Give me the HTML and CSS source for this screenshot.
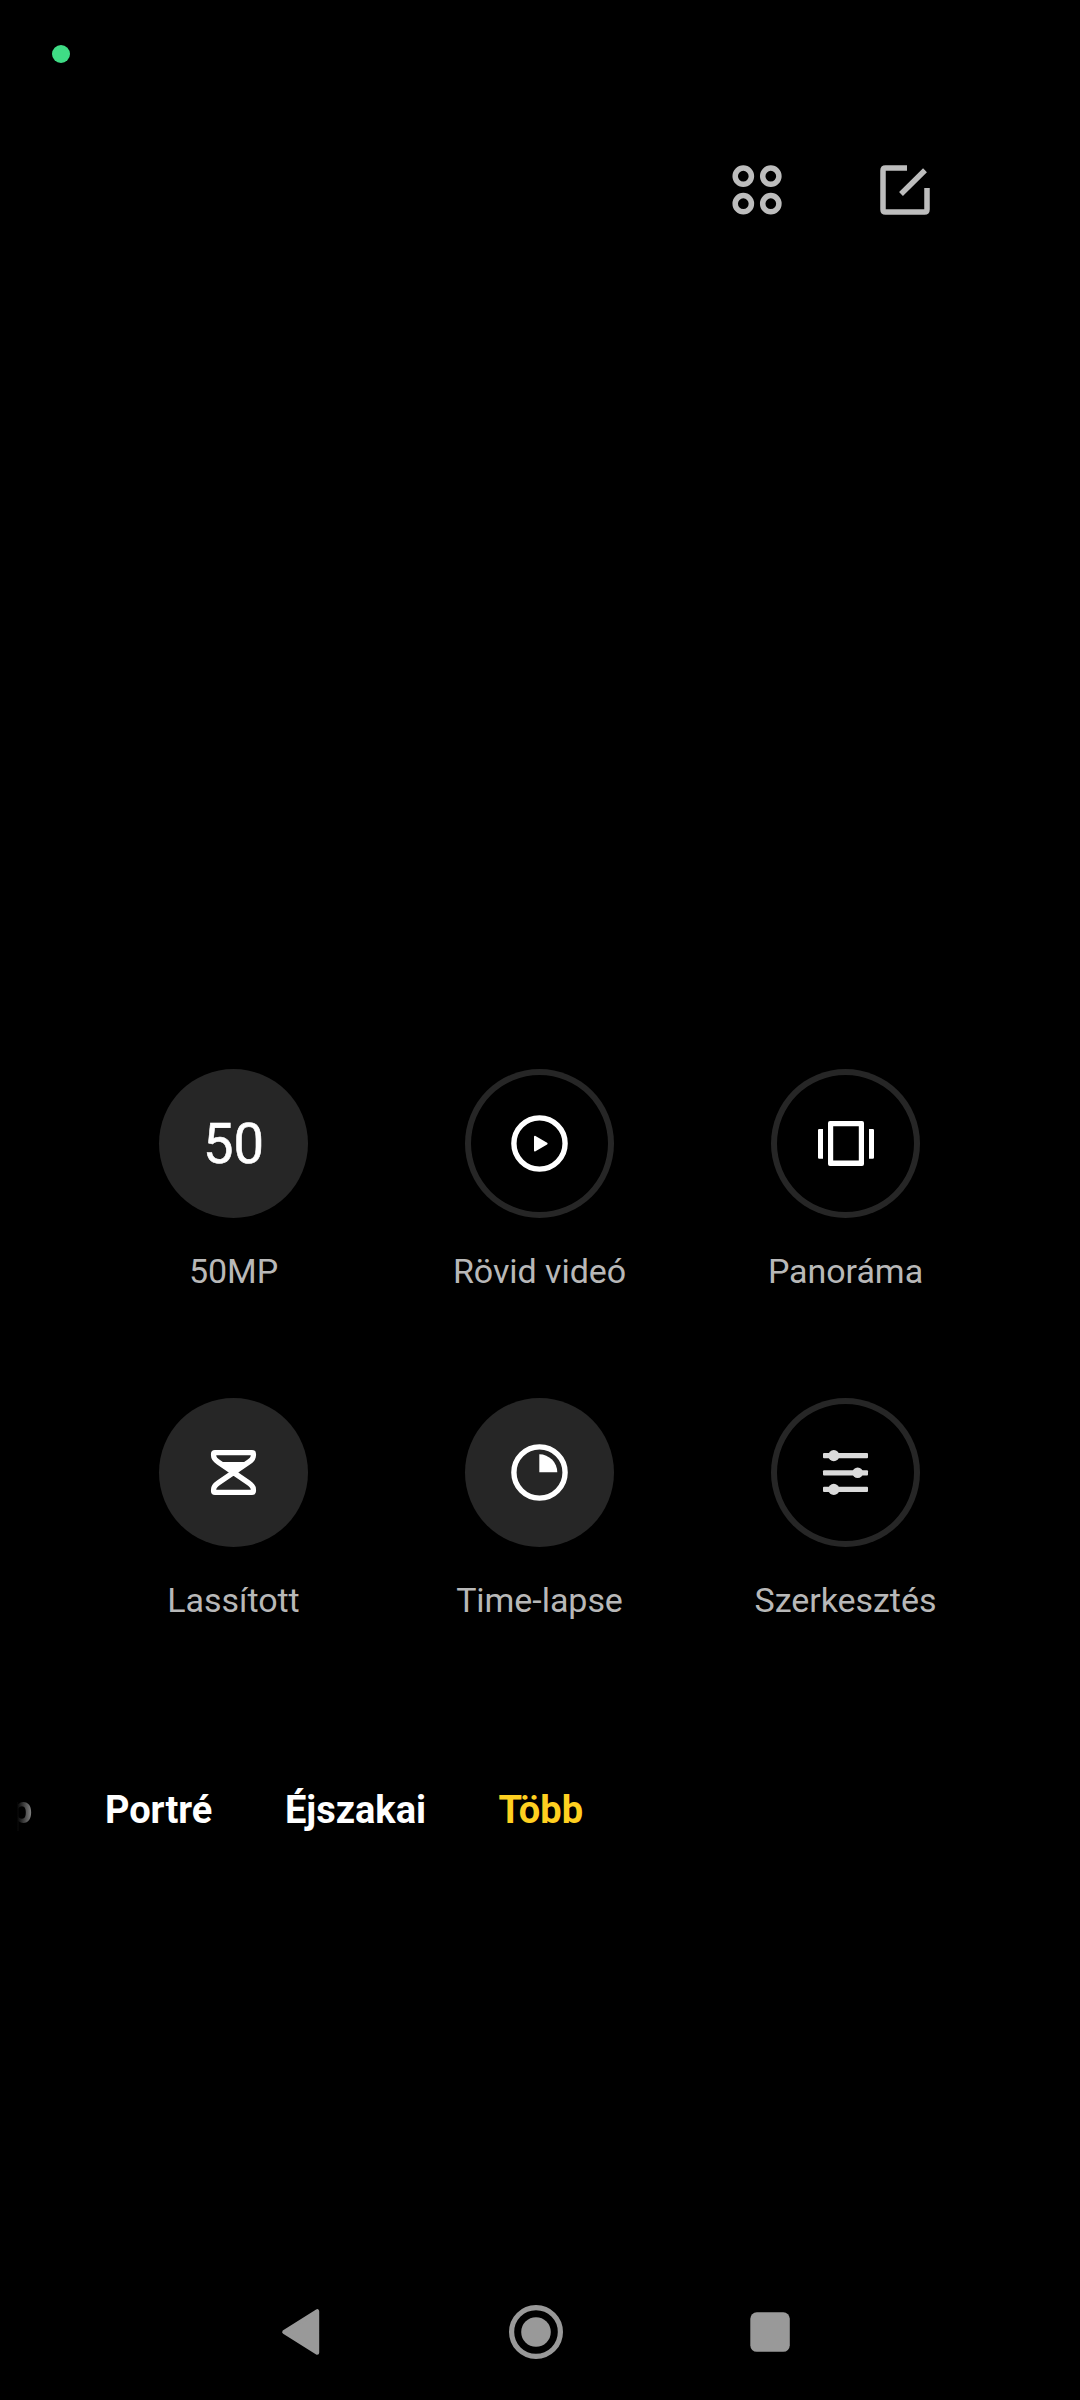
FILE: index.html
```html
<!DOCTYPE html>
<html lang="hu">
<head>
<meta charset="utf-8">
<title>Kamera</title>
<link rel="stylesheet" href="styles.css">
</head>
<body>
<header class="status"><span class="camera-dot"></span></header>
<div class="toolbar">
  <svg class="tool" viewBox="0 0 60 60" fill="none" stroke="#bdbdbd" stroke-width="5.5"><circle cx="16.3" cy="16.2" r="8.1"/><circle cx="43.8" cy="16.2" r="8.1"/><circle cx="16.3" cy="43.7" r="8.1"/><circle cx="43.8" cy="43.7" r="8.1"/></svg>
  <svg class="tool" viewBox="0 0 60 60" fill="none" stroke="#bdbdbd" stroke-width="5.5"><path d="M32 8H10.5Q8 8 8 10.5V49.5Q8 52 10.5 52H49.5Q52 52 52 49.5V28M26 34L50 10.2"/></svg>
</div>
<main class="modes">
  <div class="mode"><div class="disc filled"><span class="mp">50</span></div><span class="label">50MP</span></div>
  <div class="mode"><div class="disc ring"><svg class="icon" viewBox="0 0 149 149"><circle cx="74.5" cy="74.5" r="25.6" fill="none" stroke="#fff" stroke-width="5.4"/><path d="M70 67.8L81.6 74.6L70 81.4Z" fill="#fff" stroke="#fff" stroke-width="2" stroke-linejoin="round"/></svg></div><span class="label">Rövid videó</span></div>
  <div class="mode"><div class="disc ring"><svg class="icon" viewBox="0 0 149 149"><path d="M57 54Q57 52 59 52H91Q93 52 93 54V95Q93 97 91 97H59Q57 97 57 95ZM62.2 57.2V91.6H87.8V57.2Z" fill="#fff" fill-rule="evenodd"/><path d="M52 60V89.7H48.2Q47 89.7 47 88.5V61.2Q47 60 48.2 60ZM98 60V89.7H101.8Q103 89.7 103 88.5V61.2Q103 60 101.8 60Z" fill="#fff"/></svg></div><span class="label">Panoráma</span></div>
  <div class="mode"><div class="disc filled"><svg class="icon" viewBox="0 0 149 149"><path d="M56 54.6H93Q94.4 54.6 94.4 56V57.5Q94.4 61 89.5 64.3L59.5 84.7Q54.6 88 54.6 91.5V93Q54.6 94.4 56 94.4H93Q94.4 94.4 94.4 93V91.5Q94.4 88 89.5 84.7L59.5 64.3Q54.6 61 54.6 57.5V56Q54.6 54.6 56 54.6Z" fill="none" stroke="#fff" stroke-width="5.3" stroke-linejoin="round"/><path d="M61 64H88L74.5 75Z" fill="#fff"/></svg></div><span class="label">Lassított</span></div>
  <div class="mode"><div class="disc filled"><svg class="icon" viewBox="0 0 149 149"><circle cx="74.5" cy="74.5" r="25.6" fill="none" stroke="#fff" stroke-width="5.4"/><path d="M74.3 56.3A18 18 0 0 1 92.3 74.3H74.3Z" fill="#fff"/></svg></div><span class="label">Time-lapse</span></div>
  <div class="mode"><div class="disc ring"><svg class="icon" viewBox="0 0 149 149" fill="#dadada"><rect x="52" y="55" width="45" height="5.3" rx="1"/><rect x="52" y="72.3" width="45" height="5.3" rx="1"/><rect x="52" y="88.7" width="45" height="5.3" rx="1"/><circle cx="62.8" cy="57.6" r="5.6"/><circle cx="86.7" cy="74.8" r="5.3"/><circle cx="62.8" cy="91.4" r="5.6"/></svg></div><span class="label">Szerkesztés</span></div>
</main>
<nav class="tabs"><span class="tab faded">p</span><span class="tab">Portré</span><span class="tab">Éjszakai</span><span class="tab active">Több</span></nav>
<footer class="navbar">
  <svg class="nav-icon" viewBox="0 0 60 60"><path d="M45.2 9.2V50.8L12.2 30Z" fill="#999" stroke="#999" stroke-width="4" stroke-linejoin="round"/></svg>
  <svg class="nav-icon" viewBox="0 0 60 60"><circle cx="30" cy="30" r="24.4" fill="none" stroke="#999" stroke-width="5.2"/><circle cx="30" cy="30" r="14.8" fill="#999"/></svg>
  <svg class="nav-icon" viewBox="0 0 60 60"><rect x="10.3" y="10.3" width="39.5" height="39.5" rx="6.5" fill="#999"/></svg>
</footer>
</body>
</html>
```
FILE: styles.css
```css
* { box-sizing: border-box; }
body {
  margin: 0;
  width: 1080px;
  height: 2400px;
  display: flex;
  flex-direction: column;
  overflow: hidden;
  background: #000;
  color: #fff;
  font-family: Roboto, sans-serif;
}
svg { display: block; }
.status { height: 160px; padding: 45px 52px; }
.camera-dot { display: block; width: 18px; height: 18px; border-radius: 50%; background: #3fdc85; }
.toolbar { display: flex; justify-content: flex-end; gap: 88px; height: 60px; padding-right: 145px; }
.tool { width: 60px; height: 60px; }
.modes {
  display: grid;
  grid-template-columns: repeat(3, 306px);
  grid-auto-rows: 329px;
  height: 658px;
  margin-top: 849px;
  padding-left: 80.5px;
}
.mode { display: flex; flex-direction: column; align-items: center; gap: 33px; }
.disc { width: 149px; height: 149px; border-radius: 50%; display: flex; align-items: center; justify-content: center; }
.filled { background: #262626; }
.ring { box-shadow: inset 0 0 0 6px #262626; }
.icon { width: 149px; height: 149px; }
.mp { font-size: 56px; font-weight: 400; line-height: 56px; transform: scaleX(0.97); -webkit-text-stroke: 0.6px #fff; }
.label { font-size: 34px; line-height: 40px; letter-spacing: -0.05px; color: #b8b8b8; white-space: nowrap; }
.tabs { display: flex; gap: 72.5px; height: 46px; margin-top: 60px; padding-left: 11px; }
.tab { font-size: 38px; line-height: 46px; font-weight: 700; white-space: nowrap; }
.faded { color: transparent; background: linear-gradient(90deg, #000 28%, #888 100%); background-clip: text; -webkit-background-clip: text; }
.active { color: #ffd020; }
.navbar { display: flex; gap: 174px; margin-top: 469px; padding-left: 272px; }
.nav-icon { width: 60px; height: 60px; }
```
